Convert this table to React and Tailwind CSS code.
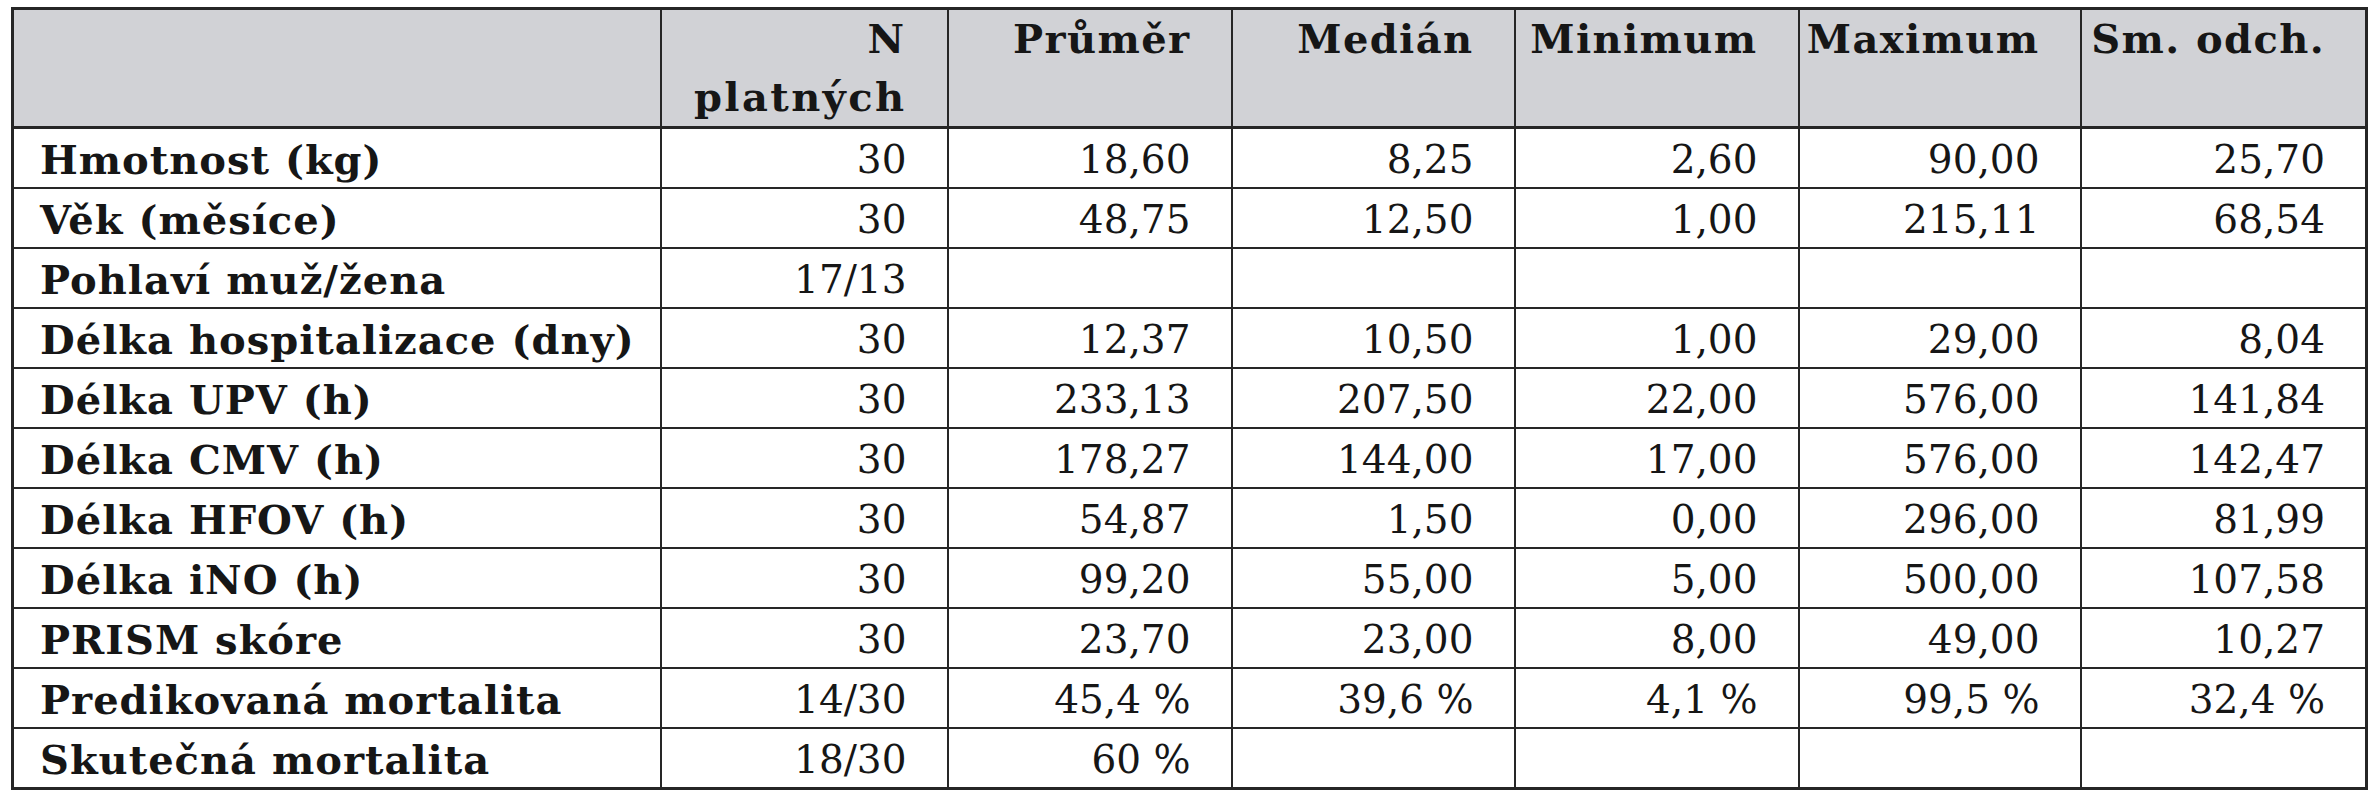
const rows = [
  ['Hmotnost (kg)', '30', '18,60', '8,25', '2,60', '90,00', '25,70'],
  ['Věk (měsíce)', '30', '48,75', '12,50', '1,00', '215,11', '68,54'],
  ['Pohlaví muž/žena', '17/13', '', '', '', '', ''],
  ['Délka hospitalizace (dny)', '30', '12,37', '10,50', '1,00', '29,00', '8,04'],
  ['Délka UPV (h)', '30', '233,13', '207,50', '22,00', '576,00', '141,84'],
  ['Délka CMV (h)', '30', '178,27', '144,00', '17,00', '576,00', '142,47'],
  ['Délka HFOV (h)', '30', '54,87', '1,50', '0,00', '296,00', '81,99'],
  ['Délka iNO (h)', '30', '99,20', '55,00', '5,00', '500,00', '107,58'],
  ['PRISM skóre', '30', '23,70', '23,00', '8,00', '49,00', '10,27'],
  ['Predikovaná mortalita', '14/30', '45,4 %', '39,6 %', '4,1 %', '99,5 %', '32,4 %'],
  ['Skutečná mortalita', '18/30', '60 %', '', '', '', ''],
];

const heads = ['Průměr', 'Medián', 'Minimum', 'Maximum', 'Sm. odch.'];
const widths = ['w-[648px]', 'w-[287px]', 'w-[284px]', 'w-[283px]', 'w-[284px]', 'w-[282px]', 'w-[286px]'];

export default function App() {
  return (
    <div className="bg-white w-[2375px] h-[800px] pl-[11px] pt-[7px] [font-family:'DejaVu_Serif',serif] text-[#161616]">
      <table className="table-fixed border-collapse border-[3px] border-[#262626] w-[2355px]">
        <colgroup>
          {widths.map((w, i) => <col key={i} className={w} />)}
        </colgroup>
        <thead>
          <tr className="bg-[#d1d2d6] h-[119px] align-top border-b-[3px] border-[#262626]">
            <th className="border-2 border-[#262626] border-b-[3px]"></th>
            <th className="border-2 border-[#262626] border-b-[3px] text-right pr-[40px] pt-0 text-[40px] font-bold leading-[58px] tracking-[2.4px] whitespace-nowrap">
              N<br />platných
            </th>
            {heads.map((h) => (
              <th key={h} className="border-2 border-[#262626] border-b-[3px] text-right pr-[40px] pt-0 text-[40px] font-bold leading-[58px] tracking-[1.4px] whitespace-nowrap">
                {h}
              </th>
            ))}
          </tr>
        </thead>
        <tbody>
          {rows.map((r) => (
            <tr key={r[0]} className="h-[60px]">
              <td className="border-2 border-[#262626] pl-[26px] pt-[3px] text-[40px] font-bold leading-[55px] tracking-[1px] whitespace-nowrap">{r[0]}</td>
              {r.slice(1).map((v, i) => (
                <td key={i} className="border-2 border-[#262626] text-right pr-[40px] pt-[3px] text-[39px] leading-[55px] whitespace-nowrap">{v}</td>
              ))}
            </tr>
          ))}
        </tbody>
      </table>
    </div>
  );
}
